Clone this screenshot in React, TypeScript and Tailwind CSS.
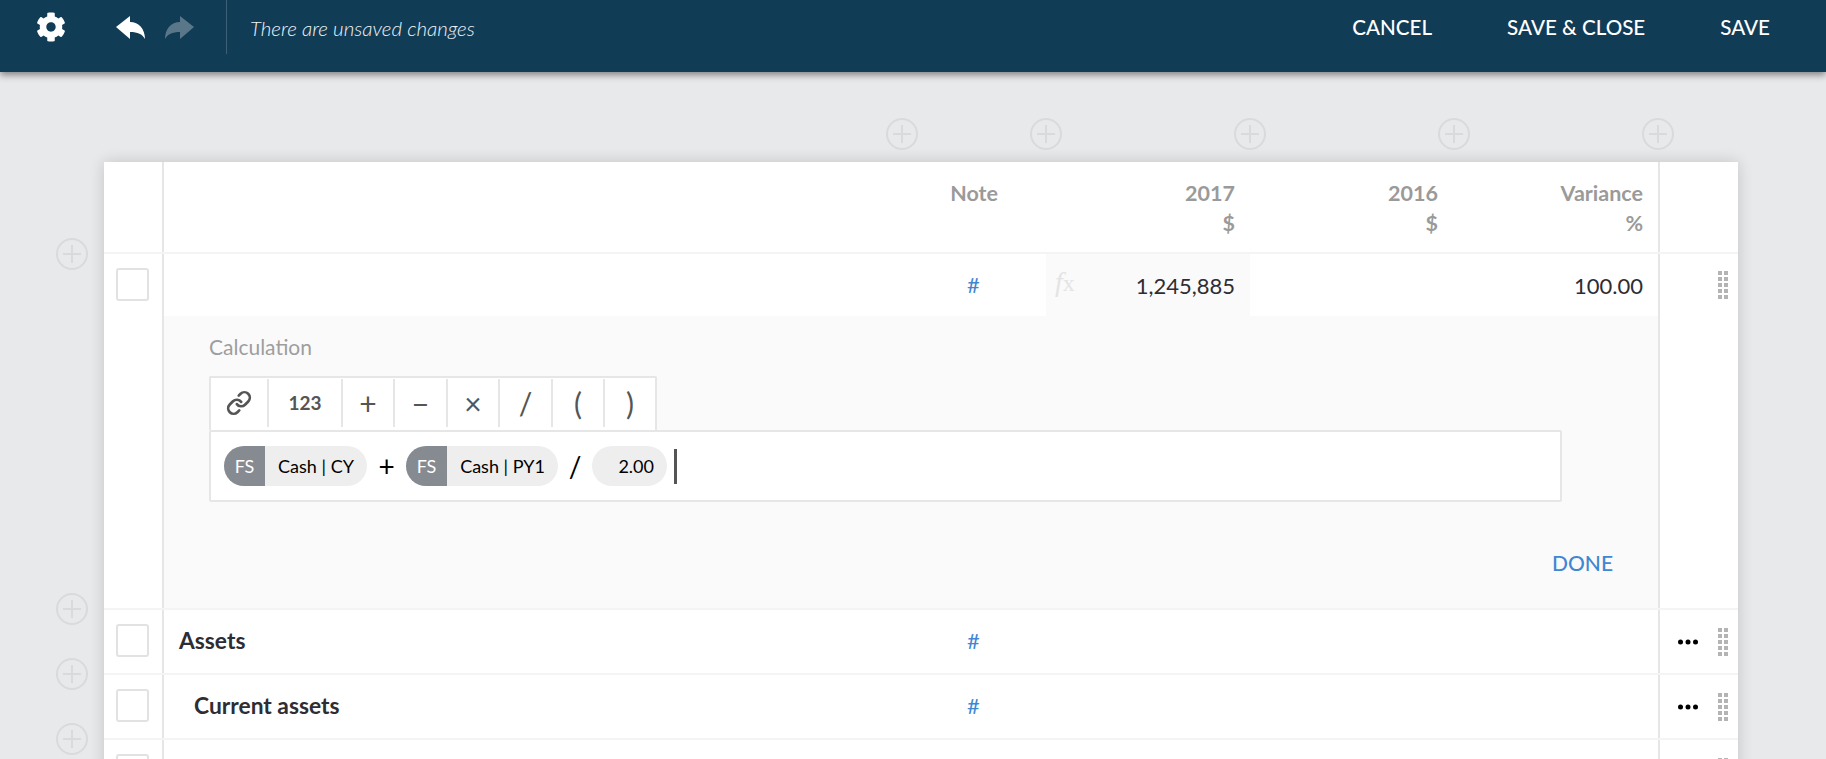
import React from 'react';
import { FaCog } from 'react-icons/fa';
import { Link } from 'lucide-react';

const lato = { fontFamily: 'Lato, "Noto Sans", sans-serif' };

const PlusCircle: React.FC<{ className?: string }> = ({ className }) => (
  <svg viewBox="0 0 32 32" className={`w-8 h-8 ${className ?? ''}`} fill="none" stroke="#d9dadc" strokeWidth="2">
    <circle cx="16" cy="16" r="15" />
    <path d="M16 7v18M7 16h18" />
  </svg>
);

const ReplyArrow: React.FC<{ className?: string }> = ({ className }) => (
  <svg viewBox="0 0 29 23" className={`w-[29px] h-[23px] ${className ?? ''}`} fill="currentColor">
    <path d="M0 11 14 0v6c9 0 15 7 15 17-3-5-7-7-15-7v7z" />
  </svg>
);

const Grip: React.FC = () => (
  <svg viewBox="0 0 10 28" className="w-[10px] h-[28px]" fill="#b4b4b4">
    {[0, 6, 12, 18, 24].map((y) => (
      <React.Fragment key={y}>
        <rect x="0" y={y} width="4" height="4" />
        <rect x="6" y={y} width="4" height="4" />
      </React.Fragment>
    ))}
  </svg>
);

const Dots: React.FC = () => (
  <svg viewBox="0 0 20 6" className="w-5 h-[6px]" fill="#000">
    <circle cx="2.5" cy="3" r="2.5" />
    <circle cx="10" cy="3" r="2.5" />
    <circle cx="17.5" cy="3" r="2.5" />
  </svg>
);

const Checkbox: React.FC = () => (
  <div className="w-[33px] h-[33px] ml-[12px] mt-[14px] rounded-[3px] border-2 border-[#e2e2e2] bg-white" />
);

const Chip: React.FC<{ label: string; width: string }> = ({ label, width }) => (
  <div className={`flex h-10 ${width} rounded-full overflow-hidden bg-[#eeeeee] text-[18px] text-black`}>
    <span className="w-[41px] shrink-0 flex items-center justify-center bg-[#858b91] text-white">FS</span>
    <span className="flex-1 flex items-center justify-center">{label}</span>
  </div>
);

const tools = [
  { width: 'w-[58px]', label: null },
  { width: 'w-[74px]', label: '123' },
  { width: 'w-[52px]', label: '+' },
  { width: 'w-[53px]', label: '−' },
  { width: 'w-[52px]', label: '×' },
  { width: 'w-[53px]', label: '/' },
  { width: 'w-[52px]', label: '(' },
  { width: 'w-[50px]', label: ')' },
];

const Row: React.FC<{ title: string; indent: string; last?: boolean }> = ({ title, indent, last }) => (
  <div className="relative flex h-[65px] border-b-2 border-[#f4f4f4]">
    <div className="w-[60px] border-r-2 border-[#e6e6e6]">
      <Checkbox />
    </div>
    <div className={`w-[737px] flex items-center pb-[2px] ${indent} text-[22.8px] font-bold text-[#2d2d33]`}>{title}</div>
    <div className="w-[145px] flex items-center justify-center pb-[3px] text-[22px] text-[#3f87d2]">{title ? '#' : ''}</div>
    <div className="w-[612px]" />
    <div className="w-[80px] border-l-2 border-[#e6e6e6] flex items-center pl-[18px]">
      {title && <Dots />}
      <div className={title ? 'ml-[20px]' : 'ml-[40px]'}>
        <Grip />
      </div>
    </div>
    {!last && <PlusCircle className="absolute -left-[48px] -bottom-[17px]" />}
  </div>
);

export default function App() {
  return (
    <div className="h-screen overflow-hidden bg-[#e8e9eb]" style={lato}>
      <header className="relative z-10 h-[72px] bg-[#113c56] shadow-[0_3px_7px_rgba(0,0,0,0.45)] flex items-start text-white">
        <FaCog className="w-[30px] h-[30px] ml-[36px] mt-[12px]" />
        <ReplyArrow className="ml-[50px] mt-[16px]" />
        <ReplyArrow className="ml-[20px] mt-[16px] -scale-x-100 opacity-30" />
        <div className="w-[1px] h-[54px] ml-[32px] bg-[#3c6076]" />
        <span className="ml-[23px] mt-[13px] text-[20.5px] font-light italic text-[#f0f3f5]">There are unsaved changes</span>
        <nav className="ml-auto mr-[56px] mt-[12px] flex gap-[75px] text-[20.6px] font-medium">
          <button>CANCEL</button>
          <button>SAVE &amp; CLOSE</button>
          <button>SAVE</button>
        </nav>
      </header>

      <div className="pt-[46px] pl-[104px]">
        <div className="flex h-8 mb-[12px]">
          <PlusCircle className="ml-[782px]" />
          <PlusCircle className="ml-[112px]" />
          <PlusCircle className="ml-[172px]" />
          <PlusCircle className="ml-[172px]" />
          <PlusCircle className="ml-[172px]" />
        </div>

        <div className="w-[1634px] bg-white shadow-[0_0_14px_rgba(0,0,0,0.16)]">
          {/* column headings */}
          <div className="relative flex h-[92px] border-b-2 border-[#f4f4f4] text-[21.5px] leading-[30px] font-bold text-[#9a9a9a]">
            <div className="w-[60px] border-r-2 border-[#e6e6e6]" />
            <div className="w-[737px]" />
            <div className="w-[145px] pt-[16px] pr-[48px] text-right">Note</div>
            <div className="w-[204px] pt-[16px] pr-[15px] text-right">
              <div>2017</div>
              <div>$</div>
            </div>
            <div className="w-[203px] pt-[16px] pr-[15px] text-right">
              <div>2016</div>
              <div>$</div>
            </div>
            <div className="w-[205px] pt-[16px] pr-[15px] text-right">
              <div>Variance</div>
              <div>%</div>
            </div>
            <div className="w-[80px] border-l-2 border-[#e6e6e6]" />
            <PlusCircle className="absolute -left-[48px] -bottom-[18px]" />
          </div>

          {/* row being edited */}
          <div className="relative flex h-[356px] border-b-2 border-[#f4f4f4]">
            <div className="w-[60px] border-r-2 border-[#e6e6e6]">
              <Checkbox />
            </div>
            <div className="w-[1494px]">
              <div className="flex h-[62px] text-[22px] text-[#2d2d33]">
                <div className="w-[737px]" />
                <div className="w-[145px] flex items-center justify-center pb-[2px] text-[#3f87d2]">#</div>
                <div className="w-[204px] flex items-center justify-between bg-[#fafafa] pl-[9px] pr-[15px]">
                  <span className="text-[#e4e4e4] text-[24px] -mt-[6px]" style={{ fontFamily: '"Liberation Serif", serif' }}>
                    <i className="text-[28px]">f</i>x
                  </span>
                  <span>1,245,885</span>
                </div>
                <div className="w-[203px]" />
                <div className="w-[205px] flex items-center justify-end pr-[15px]">100.00</div>
              </div>

              <div className="h-[292px] bg-[#fafafa] pl-[45px] pr-[45px] pt-[19px]">
                <div className="text-[21px] leading-6 text-[#9e9e9e]">Calculation</div>
                <div className="mt-[17px] w-[448px] h-[54px] border-2 border-b-0 border-[#e6e6e6] rounded-t-[2px] bg-white flex pt-[1px] pb-[3px] text-[#555555]">
                  {tools.map((tool, i) => (
                    <div
                      key={tool.width + i}
                      className={`${tool.width} flex items-center justify-center ${i < tools.length - 1 ? 'border-r-2 border-[#e6e6e6]' : ''} ${
                        tool.label === '123' ? 'text-[19px] font-bold' : 'text-[30px]'
                      }`}
                    >
                      {tool.label ?? <Link className="w-[26px] h-[26px]" strokeWidth={2.5} />}
                    </div>
                  ))}
                </div>
                <div className="w-[1353px] h-[72px] border-2 border-[#e6e6e6] rounded-[2px] bg-white flex items-center pl-[13px] text-black">
                  <Chip label="Cash | CY" width="w-[143px]" />
                  <span className="w-[39px] text-center text-[28px]">+</span>
                  <Chip label="Cash | PY1" width="w-[152px]" />
                  <span className="w-[34px] text-center text-[28px]">/</span>
                  <div className="w-[75px] h-10 rounded-full bg-[#eeeeee] flex items-center justify-end pr-[13px] text-[18px]">2.00</div>
                  <div className="ml-[7px] w-[3px] h-[35px] bg-[#555555]" />
                </div>
                <div className="mt-[49px] flex justify-end text-[21px] leading-6 font-medium text-[#3f87d2]">DONE</div>
              </div>
            </div>
            <div className="w-[80px] border-l-2 border-[#e6e6e6]">
              <div className="h-[62px] flex items-center justify-end pr-[10px]">
                <Grip />
              </div>
            </div>
            <PlusCircle className="absolute -left-[48px] -bottom-[17px]" />
          </div>

          <Row title="Assets" indent="pl-[15px]" />
          <Row title="Current assets" indent="pl-[30px]" />
          <Row title="" indent="" last />
        </div>
      </div>
    </div>
  );
}
